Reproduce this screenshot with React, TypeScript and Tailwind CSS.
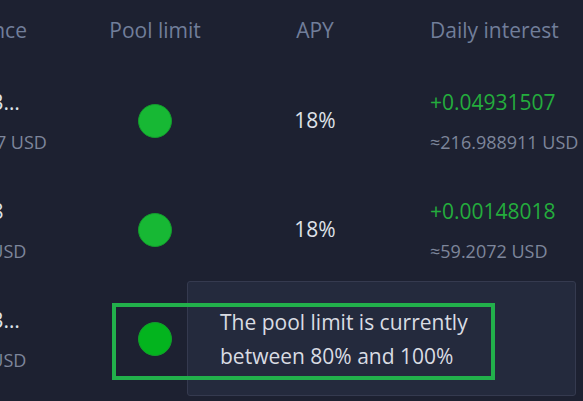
const rows = [
  { bal: "1.1430968", usd: "≈614.7 USD", daily: "+0.04931507", dailyUsd: "≈216.988911 USD", dot: "bg-[#17b834]", covered: false },
  { bal: "0.318", usd: "≈1.2 USD", daily: "+0.00148018", dailyUsd: "≈59.2072 USD", dot: "bg-[#17b834]", covered: false },
  { bal: "1.1430968", usd: "≈1.2 USD", daily: "", dailyUsd: "", dot: "bg-[#03b41e]", covered: true },
];

function Row(props: (typeof rows)[number]) {
  const { bal, usd, daily, dailyUsd, dot, covered } = props;
  return (
    <div className="grid grid-cols-[150px_130px_190px_1fr] h-[109px] items-center">
      <div className="flex flex-col gap-[14px] pl-[10px]">
        <p className="text-[21px] leading-[28px] text-[#dfe2e8] truncate w-[70px]">{bal}</p>
        <p className="text-[18px] leading-[24px] text-[#7d869b] whitespace-nowrap">{usd}</p>
      </div>
      <div className="flex justify-center">
        <span className={`w-[34px] h-[34px] rounded-full border border-[#139a2d] ${dot}`}></span>
      </div>
      {!covered && (
        <>
          <div className="flex justify-center">
            <span className="text-[21px] text-[#dfe2e8]">18%</span>
          </div>
          <div className="flex flex-col gap-[14px] pl-[20px]">
            <p className="text-[21px] leading-[28px] text-[#24ad3d] whitespace-nowrap">{daily}</p>
            <p className="text-[18px] leading-[24px] text-[#7d869b] whitespace-nowrap">{dailyUsd}</p>
          </div>
        </>
      )}
    </div>
  );
}

export default function App() {
  return (
    <div className="relative w-[583px] h-[401px] overflow-hidden bg-[#1d2131] font-['Open_Sans',sans-serif]">
      <div className="ml-[-60px]">
        <div className="grid grid-cols-[150px_130px_190px_1fr] h-[66px] pt-[16px] text-[21px] leading-[28px] text-[#717e9a]">
          <div className="pl-[10px]">Balance</div>
          <div className="text-center">Pool limit</div>
          <div className="text-center">APY</div>
          <div className="pl-[20px]">Daily interest</div>
        </div>
        {rows.map((r, i) => (
          <Row key={i} {...r} />
        ))}
      </div>

      <div className="absolute left-[187px] top-[281px] w-[389px] h-[115px] rounded-[3px] border border-[#353a4f] bg-[#242a3d] pl-[32px] pt-[23px]">
        <p className="text-[21px] leading-[34px] text-[#d9dce3]">
          The pool limit is currently
          <br />
          between 80% and 100%
        </p>
      </div>

      <div className="absolute left-[112px] top-[303px] w-[383px] h-[77px] border-4 border-[#22b14b]"></div>
    </div>
  );
}
